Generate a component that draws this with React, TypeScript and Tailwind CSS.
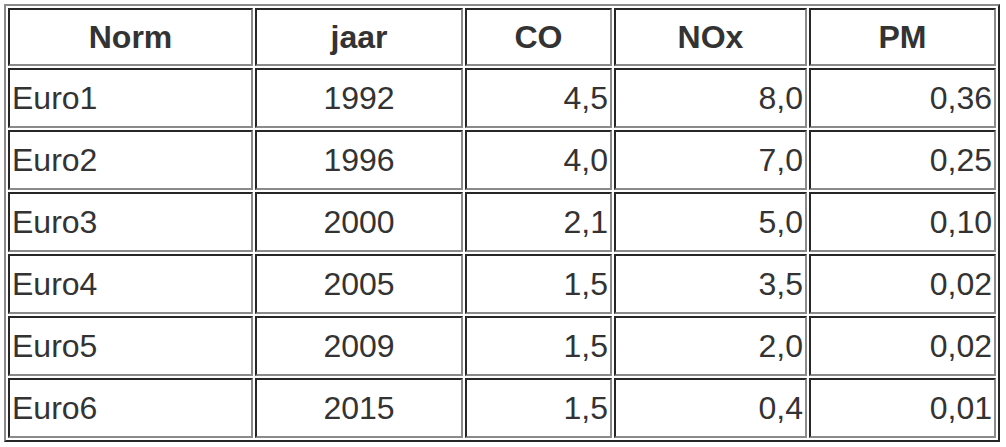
const rows = [
  ['Euro1', '1992', '4,5', '8,0', '0,36'],
  ['Euro2', '1996', '4,0', '7,0', '0,25'],
  ['Euro3', '2000', '2,1', '5,0', '0,10'],
  ['Euro4', '2005', '1,5', '3,5', '0,02'],
  ['Euro5', '2009', '1,5', '2,0', '0,02'],
  ['Euro6', '2015', '1,5', '0,4', '0,01'],
];

const cell =
  'border-2 border-t-[#262626] border-l-[#262626] border-r-[#8a8a8a] border-b-[#8a8a8a] px-[2px] py-0';

const App = () => {
  return (
    <div className="min-h-[447px] bg-white p-1 font-['Liberation_Sans',Arial,sans-serif] text-[32px] leading-[37px] text-[#333]">
      <table className="w-[996px] table-fixed border-separate border-spacing-[2px] border-2 border-t-[#8a8a8a] border-l-[#8a8a8a] border-r-[#262626] border-b-[#262626]">
        <colgroup>
          <col className="w-[245px]" />
          <col className="w-[208px]" />
          <col className="w-[147px]" />
          <col className="w-[193px]" />
          <col className="w-[187px]" />
        </colgroup>
        <thead>
          <tr className="h-[58px]">
            <th className={`${cell} text-center font-bold`}>Norm</th>
            <th className={`${cell} text-center font-bold`}>jaar</th>
            <th className={`${cell} text-center font-bold`}>CO</th>
            <th className={`${cell} text-center font-bold`}>NOx</th>
            <th className={`${cell} text-center font-bold`}>PM</th>
          </tr>
        </thead>
        <tbody>
          {rows.map((r) => (
            <tr key={r[0]} className="h-[60px]">
              <td className={`${cell} text-left`}>{r[0]}</td>
              <td className={`${cell} text-center`}>{r[1]}</td>
              <td className={`${cell} text-right`}>{r[2]}</td>
              <td className={`${cell} text-right`}>{r[3]}</td>
              <td className={`${cell} text-right`}>{r[4]}</td>
            </tr>
          ))}
        </tbody>
      </table>
    </div>
  );
};

export default App;
